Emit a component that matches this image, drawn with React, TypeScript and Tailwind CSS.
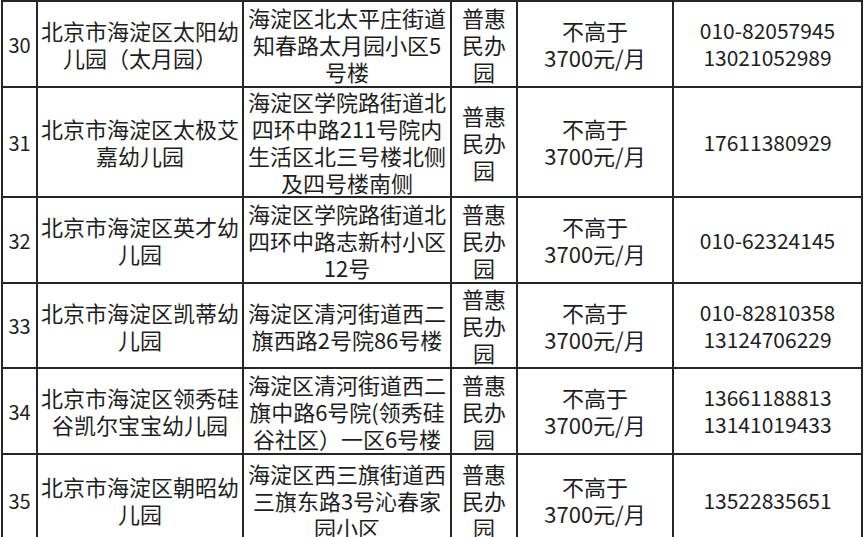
const rows = [
  {
    no: "30",
    name: ["北京市海淀区太阳幼", "儿园（太月园）"],
    addr: ["海淀区北太平庄街道", "知春路太月园小区5", "号楼"],
    phone: ["010-82057945", "13021052989"],
  },
  {
    no: "31",
    name: ["北京市海淀区太极艾", "嘉幼儿园"],
    addr: ["海淀区学院路街道北", "四环中路211号院内", "生活区北三号楼北侧", "及四号楼南侧"],
    phone: ["17611380929"],
  },
  {
    no: "32",
    name: ["北京市海淀区英才幼", "儿园"],
    addr: ["海淀区学院路街道北", "四环中路志新村小区", "12号"],
    phone: ["010-62324145"],
  },
  {
    no: "33",
    name: ["北京市海淀区凯蒂幼", "儿园"],
    addr: ["海淀区清河街道西二", "旗西路2号院86号楼"],
    phone: ["010-82810358", "13124706229"],
  },
  {
    no: "34",
    name: ["北京市海淀区领秀硅", "谷凯尔宝宝幼儿园"],
    addr: ["海淀区清河街道西二", "旗中路6号院(领秀硅", "谷社区）一区6号楼"],
    phone: ["13661188813", "13141019433"],
  },
  {
    no: "35",
    name: ["北京市海淀区朝昭幼", "儿园"],
    addr: ["海淀区西三旗街道西", "三旗东路3号沁春家", "园小区"],
    phone: ["13522835651"],
  },
];

function Lines({ lines }: { lines: string[] }) {
  return (
    <div>
      {lines.map((l, i) => (
        <div key={i} className="whitespace-nowrap">
          {l}
        </div>
      ))}
    </div>
  );
}

const cell =
  "bg-white flex items-center justify-center text-center leading-[27px]";

export default function App() {
  return (
    <div
      className="w-[864px] h-[537px] overflow-hidden bg-white text-[#1e1e1e]"
      style={{ fontFamily: '"Noto Sans CJK SC", "Noto Sans", sans-serif' }}
    >
      <div className="ml-[1px] w-max grid grid-cols-[33px_204px_206px_64px_154px_187px] grid-rows-[84px_108px_84px_83px_84px_90px] gap-[2px] p-[2px] bg-[#262626] text-[22px]">
        {rows.map((r) => (
          <>
            <div key={r.no + "n"} className={cell + " text-[20px]"}>
              {r.no}
            </div>
            <div key={r.no + "m"} className={cell}>
              <Lines lines={r.name} />
            </div>
            <div key={r.no + "a"} className={cell}>
              <Lines lines={r.addr} />
            </div>
            <div key={r.no + "t"} className={cell}>
              <Lines lines={["普惠", "民办", "园"]} />
            </div>
            <div key={r.no + "p"} className={cell}>
              <Lines lines={["不高于", "3700元/月"]} />
            </div>
            <div key={r.no + "h"} className={cell + " text-[21px]"}>
              <Lines lines={r.phone} />
            </div>
          </>
        ))}
      </div>
    </div>
  );
}
